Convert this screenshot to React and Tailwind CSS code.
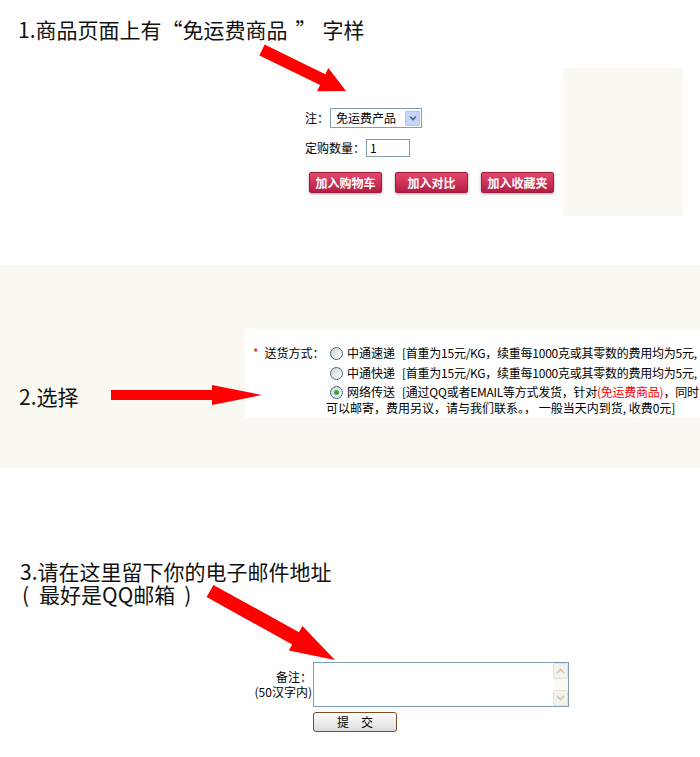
import React from "react";

const cjk = "font-['Noto_Sans_CJK_SC',sans-serif]";

function Arrow({ points }) {
  return (
    <svg className="pointer-events-none absolute left-0 top-0 h-full w-full" width="700" height="300">
      <polygon points={points} fill="#ff0000" />
    </svg>
  );
}

function RedButton({ children }) {
  return (
    <button className="h-[21px] w-[73px] rounded-[2px] border border-[#a11b3d] bg-gradient-to-b from-[#e5476d] to-[#b51c44] text-[12px] font-bold leading-[19px] text-white shadow-[0_1px_3px_rgba(0,0,0,0.35)]">
      {children}
    </button>
  );
}

function Radio({ checked }) {
  return (
    <span className="mx-[4px] inline-flex h-[13px] w-[13px] shrink-0 items-center justify-center rounded-full border border-[#3a6791] bg-gradient-to-br from-[#d2d2d2] to-white">
      {checked && <span className="h-[5px] w-[5px] rounded-full bg-[#2fae34]" />}
    </span>
  );
}

function ProductSection() {
  return (
    <section className="relative h-[265px] bg-white">
      <h1 className={`pl-[18px] pt-[18px] text-[21px] leading-[23px] text-[#111] ${cjk}`}>
        1.商品页面上有“免运费商品<span className="ml-[8px]">”</span>
        <span className="ml-[6px]">字样</span>
      </h1>
      <div className="mt-[27px] flex items-start">
        <div className={`ml-[305px] mt-[40px] w-[250px] text-[12px] text-black ${cjk}`}>
          <div className="flex items-center">
            <span className="w-[25px]">注：</span>
            <div className="flex h-[20px] w-[92px] items-center justify-between border border-[#7f9db9] bg-white pl-[5px] pr-[1px]">
              <span>免运费产品</span>
              <span className="flex h-[15px] w-[15px] items-center justify-center rounded-[1px] border border-[#b3c6f2] bg-[#c6d5fc]">
                <svg width="8" height="6" viewBox="0 0 8 6">
                  <path d="M1 1.5 L4 4.5 L7 1.5" stroke="#4d6185" strokeWidth="1.6" fill="none" />
                </svg>
              </span>
            </div>
          </div>
          <div className="mt-[11px] flex items-center">
            <span className="w-[61px]">定购数量：</span>
            <div className="h-[18px] w-[44px] border border-[#7f9db9] bg-white pl-[3px] leading-[16px]">1</div>
          </div>
          <div className="ml-[4px] mt-[15px] flex gap-[13px]">
            <RedButton>加入购物车</RedButton>
            <RedButton>加入对比</RedButton>
            <RedButton>加入收藏夹</RedButton>
          </div>
        </div>
        <div className="ml-[8px] h-[148px] w-[120px] bg-[#f9f9f1]" />
      </div>
      <Arrow points="259.4,55.4 264.6,44.6 325.3,74.2 328.4,67.9 346,91 317,91.3 320.1,85" />
    </section>
  );
}

function ShippingSection() {
  return (
    <section className="relative flex h-[203px] items-start bg-[#f9f9f1] pt-[64px]">
      <div className={`ml-[19px] mt-[55px] w-[226px] text-[21px] leading-[24px] text-[#111] ${cjk}`}>2.选择</div>
      <div className={`h-[89px] w-[455px] overflow-hidden bg-white pl-[8px] pt-[14px] text-[12px] text-black ${cjk}`}>
        <div className="flex">
          <div className="w-[73px] shrink-0 whitespace-nowrap leading-[20px]">
            <span className="text-[#ff0000]">*</span>
            <span className="ml-[6px]">送货方式：</span>
          </div>
          <div className="whitespace-nowrap">
            <div className="flex h-[20px] items-center">
              <Radio />
              <span>中通速递</span>
              <span className="ml-[7px] tracking-[-0.25px]">[首重为15元/KG，续重每1000克或其零数的费用均为5元,</span>
            </div>
            <div className="flex h-[20px] items-center">
              <Radio />
              <span>中通快递</span>
              <span className="ml-[7px] tracking-[-0.25px]">[首重为15元/KG，续重每1000克或其零数的费用均为5元,</span>
            </div>
            <div className="flex h-[18px] items-center">
              <Radio checked />
              <span>网络传送</span>
              <span className="ml-[7px] tracking-[-0.25px]">
                [通过QQ或者EMAIL等方式发货，针对<span className="text-[#ff0000]">(免运费商品)</span>，同时
              </span>
            </div>
            <div className="h-[14px] leading-[14px]">可以邮寄，费用另议，请与我们联系。， 一般当天内到货, 收费0元]</div>
          </div>
        </div>
      </div>
      <Arrow points="111,125 212,125 212,120 262,130 212,140 212,135 111,135" />
    </section>
  );
}

function EmailSection() {
  return (
    <section className="relative h-[289px] bg-white pt-[92px]">
      <h2 className={`pl-[20px] text-[21px] leading-[23px] text-[#111] ${cjk}`}>
        <div>3.请在这里留下你的电子邮件地址</div>
        <div>
          <span className="ml-[2px]">(</span>
          <span className="ml-[10px]">最好是QQ邮箱</span>
          <span className="ml-[9px]">)</span>
        </div>
      </h2>
      <div className={`mt-[56px] flex text-[12px] text-black ${cjk}`}>
        <div className="ml-[232px] w-[80px] pt-[7px] text-right leading-[15px]">
          <div>备注：</div>
          <div>(50汉字内)</div>
        </div>
        <div className="ml-[1px]">
          <div className="flex h-[45px] w-[256px] border border-[#7f9db9] bg-white">
            <div className="flex-1" />
            <div className="flex w-[15px] flex-col justify-between bg-[#fbfbf8]">
              <span className="flex h-[16px] items-center justify-center rounded-[2px] border border-[#e6e3d6] bg-[#f4f2ea]">
                <svg width="9" height="6" viewBox="0 0 9 6">
                  <path d="M1 5 L4.5 1.5 L8 5" stroke="#c9c6b8" strokeWidth="1.6" fill="none" />
                </svg>
              </span>
              <span className="flex h-[16px] items-center justify-center rounded-[2px] border border-[#e6e3d6] bg-[#f4f2ea]">
                <svg width="9" height="6" viewBox="0 0 9 6">
                  <path d="M1 1 L4.5 4.5 L8 1" stroke="#c9c6b8" strokeWidth="1.6" fill="none" />
                </svg>
              </span>
            </div>
          </div>
          <button className="mt-[5px] h-[20px] w-[84px] rounded-[3px] border border-[#7c4a1c] bg-gradient-to-b from-white to-[#dcdcdc] text-[12px] leading-[18px] text-black">
            提　交
          </button>
        </div>
      </div>
      <Arrow points="206.6,129.1 213.4,116.9 299,164.2 302.4,158.1 335,192 288.8,182.6 292.2,176.4" />
    </section>
  );
}

export default function App() {
  return (
    <div className="h-[757px] w-[700px] overflow-hidden bg-white">
      <ProductSection />
      <ShippingSection />
      <EmailSection />
    </div>
  );
}
